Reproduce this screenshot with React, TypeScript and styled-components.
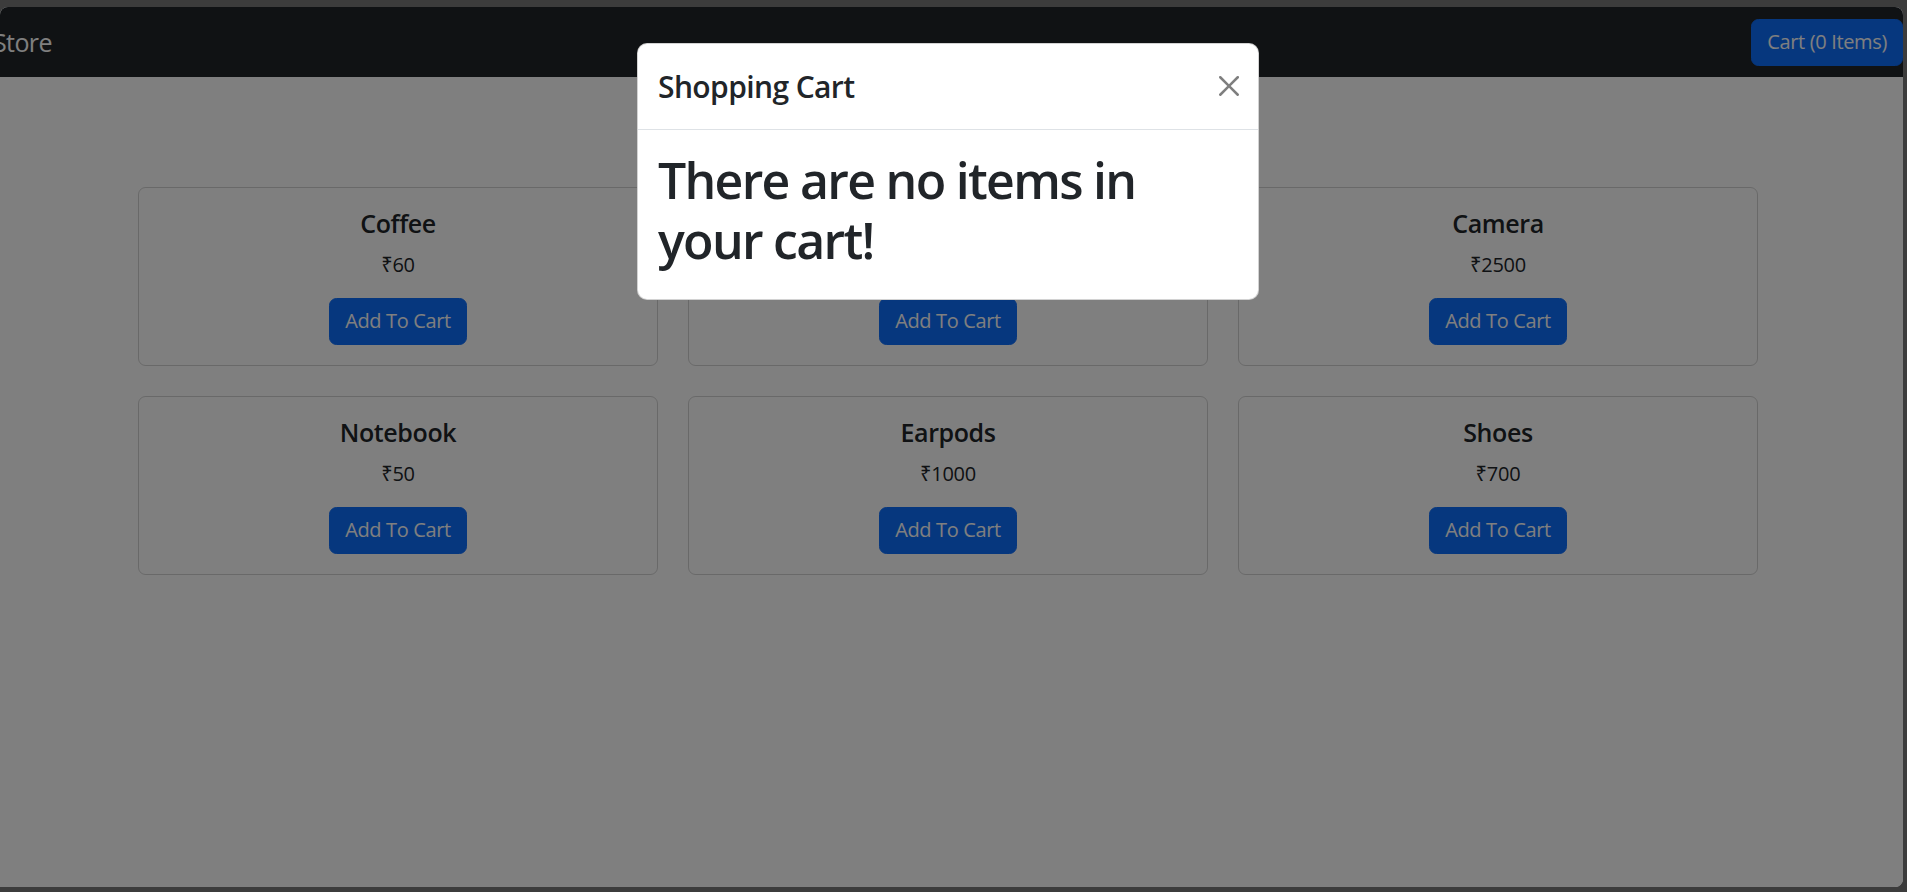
import React from "react";
import styled, { createGlobalStyle } from "styled-components";

const GlobalStyle = createGlobalStyle`
  html, body {
    margin: 0;
    padding: 0;
    background: #3c3c3c;
    overflow: hidden;
  }
  * { box-sizing: border-box; }
  body {
    font-family: "Open Sans", "Noto Sans", "DejaVu Sans", sans-serif;
    color: #212529;
  }
`;

const Frame = styled.div`
  width: 1907px;
  height: 892px;
  padding: 7px 4px 5px 0;
  background: #3c3c3c;
`;

const Page = styled.div`
  position: relative;
  height: 100%;
  background: #ffffff;
  border-radius: 8px 8px 8px 0;
  overflow: hidden;
`;

const Navbar = styled.nav`
  height: 70px;
  background: #212529;
  display: flex;
  align-items: center;
  justify-content: space-between;
`;

const Brand = styled.a`
  margin-left: -7px;
  font-size: 25px;
  line-height: 37px;
  letter-spacing: -0.6px;
  color: #ffffff;
  text-decoration: none;
`;

const Button = styled.button`
  font-family: inherit;
  font-size: 20px;
  line-height: 30px;
  letter-spacing: -0.35px;
  padding: 7px 15px 8px;
  color: #ffffff;
  background: #0d6efd;
  border: 1px solid #0d6efd;
  border-radius: 7.5px;
  cursor: pointer;
  white-space: nowrap;
`;

const Main = styled.main`
  display: flex;
  justify-content: center;
  padding: 110px 7px 0 0;
`;

const Grid = styled.div`
  width: 1620px;
  display: grid;
  grid-template-columns: repeat(3, 1fr);
  gap: 30px 30px;
`;

const Card = styled.div`
  border: 1px solid rgba(0, 0, 0, 0.175);
  border-radius: 7.5px;
  padding: 20px;
  text-align: center;
`;

const CardTitle = styled.h5`
  margin: 0 0 12px;
  font-size: 25px;
  font-weight: 600;
  line-height: 30px;
  letter-spacing: -0.4px;
`;

const Price = styled.p`
  margin: 0 0 18px;
  font-size: 20px;
  line-height: 30px;
  letter-spacing: -0.2px;
`;

const Backdrop = styled.div`
  position: absolute;
  inset: 0;
  background: rgba(0, 0, 0, 0.5);
`;

const ModalLayer = styled.div`
  position: absolute;
  inset: 0;
  display: flex;
  justify-content: center;
  align-items: flex-start;
  padding: 35.5px 7px 0 0;
`;

const Modal = styled.div`
  width: 622px;
  background: #ffffff;
  border: 1px solid rgba(0, 0, 0, 0.175);
  border-radius: 10px;
`;

const ModalHeader = styled.div`
  display: flex;
  align-items: center;
  justify-content: space-between;
  padding: 20px 19px 20px 20px;
  border-bottom: 1px solid #dee2e6;
`;

const ModalTitle = styled.div`
  font-size: 30px;
  font-weight: 600;
  line-height: 45px;
  letter-spacing: -0.6px;
`;

const CloseButton = styled.button`
  width: 20px;
  height: 20px;
  padding: 0;
  border: 0;
  background: transparent;
  opacity: 0.5;
  display: flex;
  cursor: pointer;
`;

const ModalBody = styled.div`
  padding: 20px 20px 19px;
`;

const Empty = styled.h1`
  margin: 0 0 10px;
  font-size: 50px;
  font-weight: 600;
  line-height: 60px;
  letter-spacing: -1.7px;
`;

const products = [
  { name: "Coffee", price: 60 },
  { name: "Sunglasses", price: 1000 },
  { name: "Camera", price: 2500 },
  { name: "Notebook", price: 50 },
  { name: "Earpods", price: 1000 },
  { name: "Shoes", price: 700 },
];

export default function App() {
  return (
    <>
      <GlobalStyle />
      <Frame>
        <Page>
          <Navbar>
            <Brand href="#">Store</Brand>
            <Button>Cart (0 Items)</Button>
          </Navbar>
          <Main>
            <Grid>
              {products.map((p) => (
                <Card key={p.name}>
                  <CardTitle>{p.name}</CardTitle>
                  <Price>₹{p.price}</Price>
                  <Button>Add To Cart</Button>
                </Card>
              ))}
            </Grid>
          </Main>
          <Backdrop />
          <ModalLayer>
            <Modal>
              <ModalHeader>
                <ModalTitle>Shopping Cart</ModalTitle>
                <CloseButton aria-label="Close">
                  <svg width="20" height="20" viewBox="0 0 16 16" fill="#000">
                    <path d="M.293.293a1 1 0 0 1 1.414 0L8 6.586 14.293.293a1 1 0 1 1 1.414 1.414L9.414 8l6.293 6.293a1 1 0 0 1-1.414 1.414L8 9.414l-6.293 6.293a1 1 0 0 1-1.414-1.414L6.586 8 .293 1.707a1 1 0 0 1 0-1.414" />
                  </svg>
                </CloseButton>
              </ModalHeader>
              <ModalBody>
                <Empty>There are no items in your cart!</Empty>
              </ModalBody>
            </Modal>
          </ModalLayer>
        </Page>
      </Frame>
    </>
  );
}
